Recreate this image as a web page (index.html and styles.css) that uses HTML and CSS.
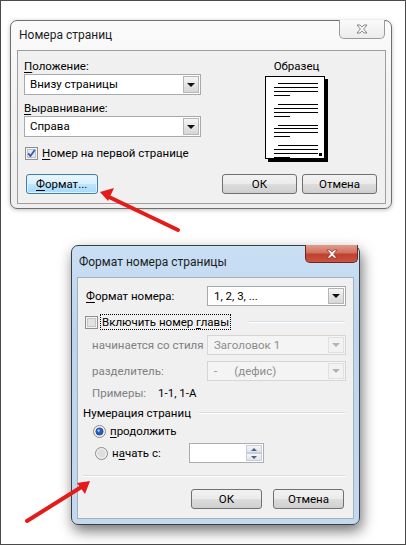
FILE: index.html
```html
<!DOCTYPE html>
<html lang="ru">
<head>
    <meta charset="UTF-8">
    <title>Номера страниц</title>
    <link rel="stylesheet" href="styles.css">
</head>
<body>
<div class="page">

    <div class="dialog dialog-main">
        <div class="titlebar">
            <span class="title">Номера страниц</span>
            <span class="close close-idle">
                <svg width="14" height="10" viewBox="0 0 14 10"><path d="M2 1h3l2 2.2 2-2.2h3l-3.4 4 3.4 4h-3l-2-2.2-2 2.2h-3l3.4-4z" fill="#fff" stroke="#777" stroke-width="0.9"/></svg>
            </span>
        </div>
        <div class="panel panel-main">
            <div class="main-top">
                <div class="main-left">
                    <div class="lbl"><u>П</u>оложение:</div>
                    <div class="combo">
                        <span class="combo-text">Внизу страницы</span>
                        <span class="combo-btn"><i class="tri"></i></span>
                    </div>
                    <div class="lbl lbl-gap"><u>В</u>ыравнивание:</div>
                    <div class="combo">
                        <span class="combo-text">Справа</span>
                        <span class="combo-btn"><i class="tri"></i></span>
                    </div>
                    <div class="check-row">
                        <svg class="box" width="13" height="13" viewBox="0 0 13 13">
                            <rect x="0.5" y="0.5" width="12" height="12" fill="#f4f4f4" stroke="#8f8f8f"/>
                            <rect x="2.5" y="2.5" width="8" height="8" fill="#dfe8f3" stroke="#b9c4d2"/>
                            <path d="M3.2 6.4l2.2 2.6 4.4-6" fill="none" stroke="#3b5aa6" stroke-width="1.8"/>
                        </svg>
                        <span><u>Н</u>омер на первой странице</span>
                    </div>
                </div>
                <div class="sample">
                    <div class="sample-title">Образец</div>
                    <div class="sheet">
                        <i class="ln ind"></i><i class="ln"></i><i class="ln"></i><i class="ln short"></i>
                        <i class="ln ind gap"></i><i class="ln"></i><i class="ln"></i><i class="ln short"></i>
                        <i class="ln ind gap"></i><i class="ln"></i><i class="ln"></i><i class="ln short"></i>
                        <i class="ln ind gap"></i><i class="ln"></i><i class="ln"></i><i class="ln short"></i>
                        <b class="num"></b>
                    </div>
                </div>
            </div>
            <div class="btn-row">
                <button class="btn btn-focus"><u>Ф</u>ормат...</button>
                <span class="spacer"></span>
                <button class="btn">ОК</button>
                <button class="btn">Отмена</button>
            </div>
        </div>
    </div>

    <div class="dialog dialog-format">
        <div class="titlebar titlebar-active">
            <span class="title">Формат номера страницы</span>
            <span class="close close-red">
                <svg width="14" height="10" viewBox="0 0 14 10"><path d="M2 1h3l2 2.2 2-2.2h3l-3.4 4 3.4 4h-3l-2-2.2-2 2.2h-3l3.4-4z" fill="#fff" stroke="#8a2a2a" stroke-width="0.7"/></svg>
            </span>
        </div>
        <div class="panel panel-format">
            <div class="frow">
                <span class="flbl"><u>Ф</u>ормат номера:</span>
                <div class="combo combo-f">
                    <span class="combo-text">1, 2, 3, ...</span>
                    <span class="combo-btn"><i class="tri"></i></span>
                </div>
            </div>
            <div class="chap-row">
                <svg class="box" width="13" height="13" viewBox="0 0 13 13">
                    <rect x="0.5" y="0.5" width="12" height="12" fill="#f4f4f4" stroke="#8f8f8f"/>
                    <rect x="2.5" y="2.5" width="8" height="8" fill="#e3e3e3" stroke="#c6c6c6"/>
                </svg>
                <span class="focus-text">Включить номер <u>г</u>лавы</span>
                <span class="rule"></span>
            </div>
            <div class="frow frow-sub">
                <span class="flbl dim">начинается со стиля</span>
                <div class="combo combo-f combo-off">
                    <span class="combo-text">Заголовок 1</span>
                    <span class="combo-btn"><i class="tri"></i></span>
                </div>
            </div>
            <div class="frow frow-sub frow-sep">
                <span class="flbl dim">разделитель:</span>
                <div class="combo combo-f combo-off">
                    <span class="combo-text">-&nbsp;&nbsp;&nbsp;&nbsp;&nbsp;&nbsp;(дефис)</span>
                    <span class="combo-btn"><i class="tri"></i></span>
                </div>
            </div>
            <div class="examples">
                <span class="dim">Примеры:</span>
                <span>1-1, 1-A</span>
            </div>
            <div class="group-head">
                <span>Нумерация страниц</span>
                <span class="rule"></span>
            </div>
            <div class="radio-row">
                <svg class="radio" width="13" height="13" viewBox="0 0 13 13">
                    <circle cx="6.5" cy="6.5" r="6" fill="#f2f2f2" stroke="#8a8a8a"/>
                    <circle cx="6.5" cy="6.5" r="3.6" fill="#2a5fbd" stroke="#1b3f86" stroke-width="0.8"/>
                    <circle cx="5.6" cy="5.6" r="1.3" fill="#8fc0ff"/>
                </svg>
                <span><u>п</u>родолжить</span>
            </div>
            <div class="radio-row radio-start">
                <svg class="radio" width="13" height="13" viewBox="0 0 13 13">
                    <circle cx="6.5" cy="6.5" r="6" fill="#f0f0f0" stroke="#8a8a8a"/>
                    <circle cx="6.5" cy="6.5" r="4.2" fill="#dedede"/>
                </svg>
                <span class="radio-lbl">н<u>а</u>чать с:</span>
                <div class="spin">
                    <span class="spin-field"></span>
                    <span class="spin-btns">
                        <span class="spin-b"><i class="tri-up"></i></span>
                        <span class="spin-b"><i class="tri-dn"></i></span>
                    </span>
                </div>
            </div>
            <div class="etched"></div>
            <div class="btn-row btn-row-f">
                <button class="btn btn-f">ОК</button>
                <button class="btn btn-f">Отмена</button>
            </div>
        </div>
    </div>

    <svg class="arrows" width="406" height="545" viewBox="0 0 406 545">
        <line x1="177" y1="229" x2="108" y2="196" stroke="#e41b1b" stroke-width="4" stroke-linecap="round"/>
        <polygon points="99,191 113,187 107,200" fill="#e41b1b"/>
        <line x1="26" y1="520" x2="82" y2="485" stroke="#e41b1b" stroke-width="4" stroke-linecap="round"/>
        <polygon points="89,480 76,482 84,493" fill="#e41b1b"/>
    </svg>
</div>
</body>
</html>
```

FILE: styles.css
```css
* {
    box-sizing: border-box;
}

body {
    margin: 0;
    background-color: #fff;
    font-family: Roboto, "Noto Sans", sans-serif;
    font-size: 11.5px;
    color: #000;
}

.page {
    position: relative;
    width: 406px;
    height: 545px;
    border: 1px solid #4a4a4a;
    background-color: #fff;
    overflow: hidden;
    padding-top: 19px;
}

u {
    text-decoration: underline;
    text-underline-offset: 2px;
}

/* ---------- window frames ---------- */

.dialog {
    display: flex;
    flex-direction: column;
    border: 1px solid #6e6e6e;
    border-radius: 7px;
}

.dialog-main {
    width: 382px;
    height: 189px;
    margin-left: 9px;
    background: linear-gradient(180deg, #fbfbfb 0%, #f3f3f3 40%, #efefef 100%);
    box-shadow: 0 1px 4px rgba(0, 0, 0, 0.25);
}

.dialog-format {
    width: 289px;
    height: 280px;
    margin-left: 70px;
    margin-top: 36px;
    border-color: #3b3f45;
    background: linear-gradient(180deg, #c9dff4 0%, #bcd5ee 30%, #c2d9ef 100%);
    box-shadow: 2px 6px 14px rgba(0, 0, 0, 0.55);
}

.titlebar {
    display: flex;
    align-items: flex-start;
    height: 29px;
    flex: none;
}

.titlebar-active {
    height: 31px;
}

.title {
    padding-left: 8px;
    line-height: 28px;
    font-size: 12px;
    color: #1e1e1e;
    white-space: nowrap;
}

.titlebar-active .title {
    padding-left: 7px;
    line-height: 32px;
}

.close {
    margin-left: auto;
    display: flex;
    align-items: center;
    justify-content: center;
    border-radius: 0 0 5px 5px;
}

.close-idle {
    width: 46px;
    height: 19px;
    margin-right: 6px;
    margin-top: -1px;
    border: 1px solid #9a9a9a;
    border-top: none;
    background: linear-gradient(180deg, #fafafa, #ececec);
}

.close-red {
    width: 53px;
    height: 18px;
    margin-right: 1px;
    margin-top: -1px;
    border: 1px solid #6a2525;
    border-top: none;
    background: linear-gradient(180deg, #e09c8e 0%, #d2705f 45%, #c0402c 55%, #c9553f 100%);
}

.panel {
    flex: 1;
    background-color: #f0f0f0;
    border: 1px solid #a8b0b8;
}

/* ---------- first dialog ---------- */

.panel-main {
    margin: 0 5px 4px 6px;
    padding: 8px 8px 0 6px;
    border-color: #9f9f9f;
}

.main-top {
    display: flex;
}

.main-left {
    width: 177px;
    white-space: nowrap;
}

.lbl {
    line-height: 15px;
}

.lbl-gap {
    margin-top: 6px;
}

.combo {
    display: flex;
    height: 21px;
    border: 1px solid #a5a9b0;
    background-color: #fff;
    padding: 1px;
}

.combo-text {
    flex: 1;
    padding-left: 4px;
    line-height: 17px;
    white-space: nowrap;
}

.combo-btn {
    width: 16px;
    display: flex;
    align-items: center;
    justify-content: center;
    border: 1px solid #b6b6b6;
    background: linear-gradient(180deg, #f6f6f6 0%, #e6e6e6 50%, #d6d6d6 100%);
}

.tri {
    width: 0;
    height: 0;
    border-left: 4px solid transparent;
    border-right: 4px solid transparent;
    border-top: 4px solid #111;
}

.check-row {
    display: flex;
    align-items: center;
    gap: 4px;
    margin-top: 9px;
    margin-left: 1px;
    line-height: 15px;
}

.box, .radio {
    flex: none;
}

.sample {
    width: 63px;
    margin-left: 64px;
    display: flex;
    flex-direction: column;
    align-items: center;
}

.sample-title {
    line-height: 15px;
}

.sheet {
    position: relative;
    width: 60px;
    height: 83px;
    margin-top: 2px;
    margin-right: 3px;
    border: 1px solid #000;
    background-color: #fff;
    box-shadow: 3px 3px 0 #000;
    padding: 6px 6px 0 8px;
    display: flex;
    flex-direction: column;
    gap: 3px;
}

.ln {
    display: block;
    height: 1px;
    background-color: #000;
}

.ln.ind {
    margin-left: 4px;
}

.ln.short {
    width: 16px;
}

.ln.gap {
    margin-top: 5px;
}

.num {
    position: absolute;
    right: 2px;
    bottom: 2px;
    width: 3px;
    height: 3px;
    background-color: #000;
}

.btn-row {
    display: flex;
    gap: 5px;
    margin-top: 13px;
}

.spacer {
    flex: 1;
}

.btn {
    width: 75px;
    height: 20px;
    padding: 0;
    font-family: inherit;
    font-size: 11.5px;
    color: #000;
    border: 1px solid #707070;
    border-radius: 3px;
    background: linear-gradient(180deg, #f2f2f2 0%, #ebebeb 50%, #dddddd 51%, #cfcfcf 100%);
}

.btn-focus {
    width: 72px;
    margin-left: 2px;
    border-color: #3c7fb1;
    background: linear-gradient(180deg, #eaf6fd 0%, #d9f0fc 50%, #bee6fd 51%, #a7d9f5 100%);
    box-shadow: inset 0 0 0 1px #e4f3fb;
    text-align: left;
    padding-left: 9px;
}

/* ---------- second dialog ---------- */

.panel-format {
    margin: 0 5px 5px 5px;
    padding: 8px 8px 0 5px;
}

.frow {
    display: grid;
    grid-template-columns: 124px 139px;
    align-items: center;
    height: 20px;
}

.flbl {
    padding-left: 3px;
    white-space: nowrap;
}

.combo-f {
    height: 20px;
}

.combo-f .combo-text {
    line-height: 16px;
    padding-left: 5px;
}

.combo-off {
    border-color: #d5d5d5;
    background-color: #f4f4f4;
    color: #8d8d8d;
}

.combo-off .combo-btn {
    border-color: #e0e0e0;
    background: #f2f2f2;
}

.combo-off .tri {
    border-top-color: #b4b4b4;
}

.dim {
    color: #808080;
}

.frow-sub {
    margin-top: 5px;
}

.frow-sub .flbl {
    padding-left: 9px;
}

.frow-sep {
    margin-top: 6px;
}

.chap-row {
    display: flex;
    align-items: center;
    gap: 2px;
    height: 16px;
    margin-top: 8px;
    margin-left: 2px;
}

.focus-text {
    padding: 0 1px;
    line-height: 14px;
    border: 1px dotted #000;
    white-space: nowrap;
}

.rule {
    flex: 1;
    height: 2px;
    border-top: 1px solid #d5dfe5;
    border-bottom: 1px solid #fff;
}

.chap-row .rule {
    margin-left: 16px;
}

.examples {
    display: flex;
    gap: 12px;
    margin-top: 5px;
    padding-left: 9px;
    line-height: 14px;
}

.group-head {
    display: flex;
    align-items: center;
    gap: 8px;
    margin-top: 6px;
    line-height: 14px;
}

.radio-row {
    display: flex;
    align-items: center;
    gap: 4px;
    margin-top: 4px;
    padding-left: 10px;
    line-height: 14px;
}

.radio-start {
    height: 20px;
    margin-top: 5px;
    padding-left: 12px;
}

.radio-lbl {
    width: 73px;
}

.spin {
    display: flex;
    width: 75px;
    height: 20px;
    border: 1px solid #abadb3;
    background-color: #fff;
    padding: 1px;
}

.spin-field {
    flex: 1;
}

.spin-btns {
    width: 16px;
    display: flex;
    flex-direction: column;
}

.spin-b {
    flex: 1;
    display: flex;
    align-items: center;
    justify-content: center;
    border: 1px solid #c9ced6;
    background: linear-gradient(180deg, #f4f6f9, #dfe4ea);
}

.tri-up, .tri-dn {
    width: 0;
    height: 0;
    border-left: 3px solid transparent;
    border-right: 3px solid transparent;
}

.tri-up {
    border-bottom: 3px solid #4d6185;
}

.tri-dn {
    border-top: 3px solid #4d6185;
}

.etched {
    height: 2px;
    margin-top: 12px;
    border-top: 1px solid #dcdcdc;
    border-bottom: 1px solid #fff;
}

.btn-row-f {
    justify-content: flex-end;
    gap: 11px;
    margin-top: 12px;
    padding-right: 1px;
}

.btn-f {
    width: 71px;
}

/* ---------- annotation arrows ---------- */

.arrows {
    position: absolute;
    left: 0;
    top: 0;
    pointer-events: none;
}
```
